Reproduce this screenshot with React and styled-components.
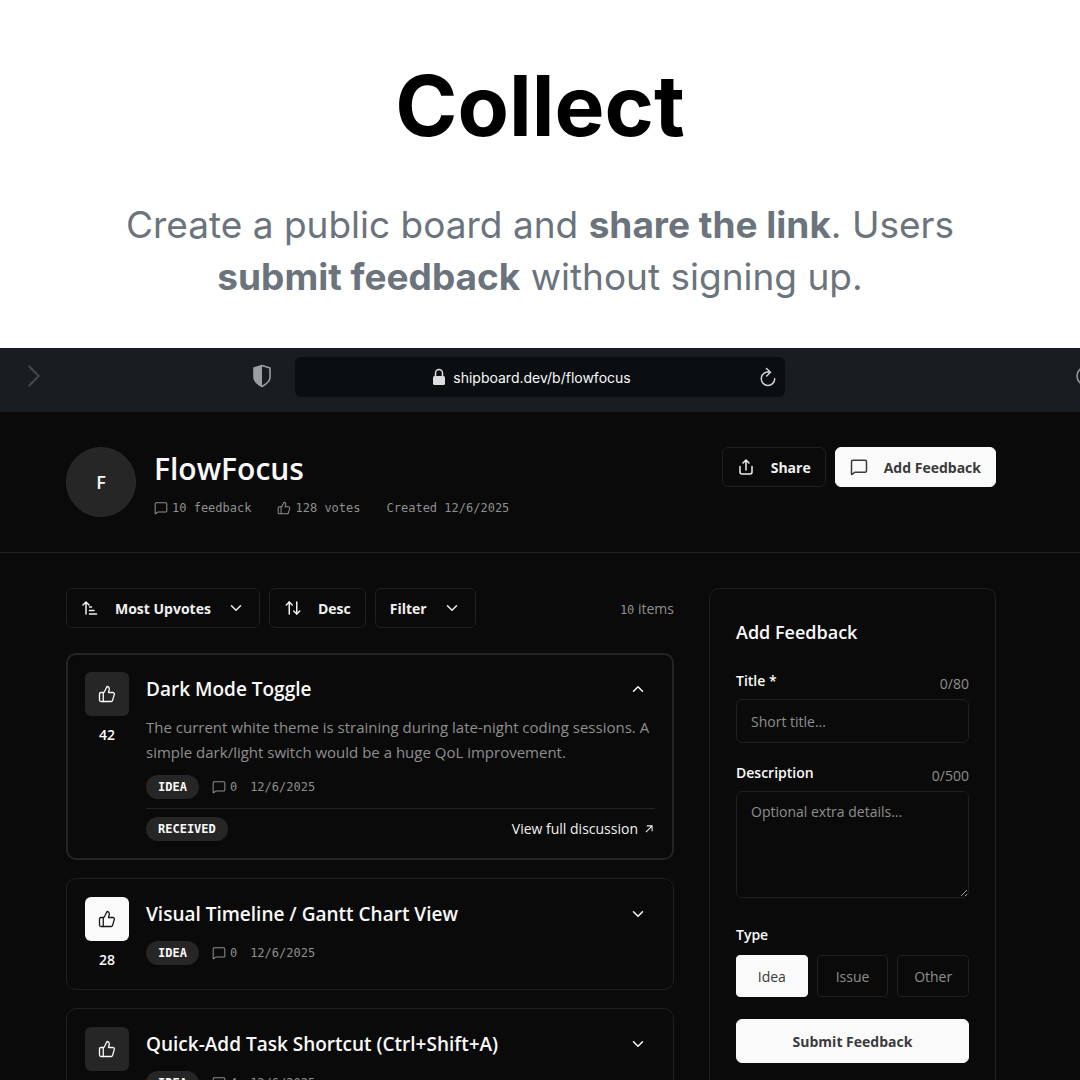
import React, { useState } from "react";
import styled, { createGlobalStyle, css } from "styled-components";
import {
  ArrowUpDown,
  ChevronDown,
  ChevronRight,
  ChevronUp,
  MessageSquare,
  ThumbsUp,
} from "lucide-react";

const GlobalStyle = createGlobalStyle`
  * {
    box-sizing: border-box;
  }
  body {
    margin: 0;
    background: #fff;
    font-family: "Open Sans", "Noto Sans", sans-serif;
  }
  h1, h2, h3, p, fieldset {
    margin: 0;
  }
  button, input, textarea {
    font-family: inherit;
  }
`;

const Page = styled.main`
  display: flex;
  flex-direction: column;
  height: 100vh;
  overflow: hidden;
`;

// Intro
const Hero = styled.section`
  flex: none;
  padding: 52px 80px 44px;
  text-align: center;
  font-family: Inter, sans-serif;
`;

const HeroTitle = styled.h1`
  font-size: 84px;
  line-height: 108px;
  font-weight: 700;
  color: #000;
`;

const HeroText = styled.p`
  max-width: 880px;
  margin: 39px auto 1px;
  font-size: 37px;
  line-height: 52px;
  color: #6b737c;

  strong {
    font-weight: 700;
  }
`;

// Browser bar
const BrowserBar = styled.div`
  flex: none;
  display: grid;
  grid-template-columns: 1fr 490px 1fr;
  height: 64px;
  padding-top: 8px;
  background: #181d20;
  overflow: hidden;
`;

const BarSide = styled.div`
  display: flex;
  align-items: center;
  justify-content: ${(p) => (p.$end ? "flex-end" : "space-between")};
  height: 40px;
  padding: ${(p) => (p.$end ? "0" : "0 22px 0 15px")};
  margin-right: ${(p) => (p.$end ? "-16px" : "0")};
`;

const AddressField = styled.div`
  display: flex;
  align-items: center;
  height: 40px;
  margin-top: 1px;
  padding: 0 8px 0 10px;
  border-radius: 6px;
  background: #0a0e11;
`;

const Address = styled.span`
  flex: 1;
  display: flex;
  align-items: center;
  justify-content: center;
  gap: 8px;
  font-family: Inter, sans-serif;
  font-size: 14px;
  color: #f8f9f9;
`;

const BarButton = styled.button`
  display: flex;
  padding: 0;
  border: 0;
  background: none;
  color: ${(p) => p.$color};
`;

// Board
const Board = styled.div`
  flex: 1;
  min-height: 0;
  background: #0a0a0a;
  color: #fafafa;
`;

const BoardHeader = styled.header`
  display: flex;
  align-items: flex-start;
  gap: 18px;
  padding: 35px 84px 35px 66px;
  border-bottom: 1px solid #242424;
`;

const Avatar = styled.div`
  display: flex;
  align-items: center;
  justify-content: center;
  width: 70px;
  height: 70px;
  border: 1px solid #2c2c2c;
  border-radius: 50%;
  background: #262626;
  font-size: 18px;
  font-weight: 600;
`;

const BoardInfo = styled.div`
  flex: 1;
`;

const BoardName = styled.h2`
  font-size: 30px;
  line-height: 44px;
  font-weight: 600;
`;

const Stats = styled.div`
  display: flex;
  gap: 26px;
  margin-top: 8px;
`;

const Stat = styled.span`
  display: flex;
  align-items: center;
  gap: 4px;
  font-family: "DejaVu Sans Mono", monospace;
  font-size: 12px;
  line-height: 18px;
  color: #8f8f8f;
`;

const Actions = styled.div`
  display: flex;
  gap: 9px;
`;

const Button = styled.button`
  display: flex;
  align-items: center;
  gap: 16px;
  height: 40px;
  padding: 0 14px;
  border: 1px solid #1f1f1f;
  border-radius: 6px;
  background: #0a0a0a;
  color: #f0f0f0;
  font-size: 14px;
  font-weight: 700;
  white-space: nowrap;

  ${(p) =>
    p.$primary &&
    css`
      border-color: #fafafa;
      background: #fafafa;
      color: #3a3a3a;
    `}
`;

const Content = styled.div`
  display: grid;
  grid-template-columns: minmax(0, 1fr) 287px;
  align-items: start;
  gap: 35px;
  padding: 35px 84px 35px 66px;
`;

const Toolbar = styled.div`
  display: flex;
  align-items: center;
  gap: 9px;
`;

const ItemCount = styled.span`
  margin-left: auto;
  font-size: 14px;
  color: #8f8f8f;

  span {
    font-family: "DejaVu Sans Mono", monospace;
    font-size: 12px;
  }
`;

const CardList = styled.div`
  display: flex;
  flex-direction: column;
  gap: 18px;
  margin-top: 25px;
`;

const Card = styled.article`
  display: flex;
  align-items: flex-start;
  gap: 17px;
  padding: ${(p) => (p.$open ? "17px" : "18px")};
  border: ${(p) => (p.$open ? "2px solid #242424" : "1px solid #1f1f1f")};
  border-radius: 10px;
`;

const Votes = styled.div`
  display: flex;
  flex-direction: column;
  align-items: center;
  gap: 8px;
  font-size: 14px;
  line-height: 22px;
  font-weight: 600;
`;

const VoteButton = styled.button`
  display: flex;
  align-items: center;
  justify-content: center;
  width: 44px;
  height: 44px;
  border: 0;
  border-radius: 6px;
  background: ${(p) => (p.$voted ? "#fafafa" : "#262626")};
  color: ${(p) => (p.$voted ? "#171717" : "#fafafa")};
`;

const CardBody = styled.div`
  flex: 1;
  min-width: 0;
  display: flex;
  flex-direction: column;
  gap: 9px;
`;

const CardTop = styled.div`
  display: flex;
  align-items: center;
  justify-content: space-between;
  height: 34px;
`;

const CardTitle = styled.h3`
  font-size: 19px;
  line-height: 26px;
  font-weight: 600;
`;

const Toggle = styled.button`
  display: flex;
  align-items: center;
  justify-content: center;
  width: 34px;
  height: 34px;
  padding: 0;
  border: 0;
  background: none;
  color: #fafafa;
`;

const CardText = styled.p`
  font-size: 15px;
  line-height: 25px;
  color: #8f8f8f;
`;

const Meta = styled.div`
  display: flex;
  align-items: center;
  gap: 13px;
  padding-top: 1px;
`;

const Badge = styled.span`
  padding: 0 12px;
  border-radius: 12px;
  background: #262626;
  font-family: "DejaVu Sans Mono", monospace;
  font-size: 12px;
  line-height: 24px;
  font-weight: 700;
`;

const CardFoot = styled.div`
  display: flex;
  align-items: center;
  justify-content: space-between;
  padding-top: 8px;
  border-top: 1px solid #242424;
`;

const DiscussionLink = styled.a`
  display: flex;
  align-items: center;
  gap: 7px;
  padding-right: 2px;
  color: #f0f0f0;
  font-size: 14px;
  line-height: 24px;
  text-decoration: none;
`;

// Feedback form
const Panel = styled.form`
  padding: 26px;
  border: 1px solid #1f1f1f;
  border-radius: 10px;
`;

const PanelTitle = styled.h3`
  font-size: 18px;
  line-height: 34px;
  font-weight: 600;
`;

const FieldHead = styled.div`
  display: flex;
  align-items: center;
  justify-content: space-between;
  margin-top: ${(p) => p.$space};
  font-size: 14px;
  line-height: 30px;
  color: #8f8f8f;
`;

const Label = styled.label`
  color: #fafafa;
  font-size: 14px;
  line-height: 24px;
  font-weight: 600;
  align-self: flex-start;
`;

const fieldStyle = css`
  display: block;
  width: 100%;
  border: 1px solid #1f1f1f;
  border-radius: 6px;
  background: #0a0a0a;
  color: #fafafa;
  font-size: 14px;

  &::placeholder {
    color: #8f8f8f;
    opacity: 1;
  }
`;

const TextInput = styled.input`
  ${fieldStyle}
  height: 44px;
  padding: 0 14px;
`;

const TextArea = styled.textarea`
  ${fieldStyle}
  height: 107px;
  padding: 8px 14px;
  line-height: 24px;
  resize: vertical;
  color-scheme: dark;
`;

const TypeGroup = styled.fieldset`
  margin-top: 25px;
  padding: 0;
  border: 0;
  min-width: 0;
`;

const TypeLegend = styled.legend`
  padding: 0;
  font-size: 14px;
  line-height: 24px;
  font-weight: 600;
`;

const TypeRow = styled.div`
  display: grid;
  grid-template-columns: repeat(3, 1fr);
  gap: 9px;
  margin-top: 8px;
`;

const TypeButton = styled.button`
  height: 42px;
  padding: 0;
  border: 1px solid ${(p) => (p.$active ? "#fafafa" : "#1f1f1f")};
  border-radius: 4px;
  background: ${(p) => (p.$active ? "#fafafa" : "#0a0a0a")};
  color: ${(p) => (p.$active ? "#3a3a3a" : "#8f8f8f")};
  font-size: 14px;
`;

const SubmitButton = styled(Button)`
  justify-content: center;
  width: 100%;
  height: 44px;
  margin-top: 22px;
`;

function ShieldIcon() {
  return (
    <svg width="22" height="24" viewBox="0 0 22 24" fill="none">
      <path
        d="M11 1.500 19 4v9.500c0 4-3.500 6.500-8 9-4.500-2.500-8-5-8-9V4z"
        stroke="currentColor"
        strokeWidth="1.600"
        strokeLinejoin="round"
      />
      <path d="M11 1.500 3 4v9.500c0 4 3.500 6.500 8 9z" fill="currentColor" />
    </svg>
  );
}

function LockIcon() {
  return (
    <svg width="12" height="18" viewBox="0 0 12 18" fill="none">
      <path
        d="M2.500 9V5a3.500 3.500 0 0 1 7 0v4"
        stroke="#dcdddd"
        strokeWidth="1.500"
      />
      <rect y="8" width="12" height="9" rx="1.500" fill="#dcdddd" />
    </svg>
  );
}

function ReloadIcon() {
  return (
    <svg width="18" height="20" viewBox="0 0 18 20" fill="none">
      <path
        d="M10.500 5.200a6.700 6.700 0 1 0 5.200 6.500M7.500 1.500l4 3.800-3.800 3.700"
        stroke="currentColor"
        strokeWidth="1.500"
        strokeLinecap="round"
        strokeLinejoin="round"
      />
    </svg>
  );
}

function ShareIcon() {
  return (
    <svg width="18" height="18" viewBox="0 0 18 18" fill="none">
      <path
        d="M3 8.500v5.500q0 2 2 2h8q2 0 2-2V8.500M9 12V2M6 5l3-3 3 3"
        stroke="currentColor"
        strokeWidth="1.500"
        strokeLinecap="round"
        strokeLinejoin="round"
      />
    </svg>
  );
}

function SortIcon() {
  return (
    <svg width="18" height="18" viewBox="0 0 18 18" fill="none">
      <path
        d="M5 15V3M2 6l3-3 3 3M8.500 8h2M8.500 11.500h4.500M8.500 15h7"
        stroke="currentColor"
        strokeWidth="1.500"
        strokeLinecap="round"
        strokeLinejoin="round"
      />
    </svg>
  );
}

function OutIcon() {
  return (
    <svg width="8" height="8" viewBox="0 0 9 9" fill="none">
      <path d="M1 8l7-7M2 1h6v6" stroke="currentColor" strokeWidth="1.200" />
    </svg>
  );
}

const ITEMS = [
  {
    id: 1,
    title: "Dark Mode Toggle",
    votes: 42,
    comments: 0,
    text: "The current white theme is straining during late-night coding sessions. A simple dark/light switch would be a huge QoL improvement.",
    status: "RECEIVED",
  },
  {
    id: 2,
    title: "Visual Timeline / Gantt Chart View",
    votes: 28,
    comments: 0,
    voted: true,
  },
  {
    id: 3,
    title: "Quick-Add Task Shortcut (Ctrl+Shift+A)",
    votes: 21,
    comments: 4,
  },
];

function FeedbackCard({ item, open, onToggle }) {
  return (
    <Card $open={open}>
      <Votes>
        <VoteButton $voted={item.voted} aria-label="Upvote">
          <ThumbsUp size={18} strokeWidth={1.75} />
        </VoteButton>
        {item.votes}
      </Votes>
      <CardBody>
        <CardTop>
          <CardTitle>{item.title}</CardTitle>
          <Toggle aria-label="Toggle details" onClick={onToggle}>
            {open ? <ChevronUp size={18} /> : <ChevronDown size={18} />}
          </Toggle>
        </CardTop>
        {open && <CardText>{item.text}</CardText>}
        <Meta>
          <Badge>IDEA</Badge>
          <Stat>
            <MessageSquare size={14} strokeWidth={1.75} />
            {item.comments}
          </Stat>
          <Stat>12/6/2025</Stat>
        </Meta>
        {open && (
          <CardFoot>
            <Badge>{item.status}</Badge>
            <DiscussionLink href="#discussion">
              View full discussion <OutIcon />
            </DiscussionLink>
          </CardFoot>
        )}
      </CardBody>
    </Card>
  );
}

function FeedbackForm() {
  const [title, setTitle] = useState("");
  const [details, setDetails] = useState("");
  const [type, setType] = useState("Idea");

  return (
    <Panel onSubmit={(e) => e.preventDefault()}>
      <PanelTitle>Add Feedback</PanelTitle>
      <FieldHead $space="20px">
        <Label htmlFor="title">Title *</Label>
        <span>{title.length}/80</span>
      </FieldHead>
      <TextInput
        id="title"
        maxLength={80}
        placeholder="Short title..."
        value={title}
        onChange={(e) => setTitle(e.target.value)}
      />
      <FieldHead $space="18px">
        <Label htmlFor="details">Description</Label>
        <span>{details.length}/500</span>
      </FieldHead>
      <TextArea
        id="details"
        maxLength={500}
        placeholder="Optional extra details..."
        value={details}
        onChange={(e) => setDetails(e.target.value)}
      />
      <TypeGroup>
        <TypeLegend>Type</TypeLegend>
        <TypeRow>
          {["Idea", "Issue", "Other"].map((name) => (
            <TypeButton
              key={name}
              type="button"
              $active={name === type}
              aria-pressed={name === type}
              onClick={() => setType(name)}
            >
              {name}
            </TypeButton>
          ))}
        </TypeRow>
      </TypeGroup>
      <SubmitButton type="submit" $primary>
        Submit Feedback
      </SubmitButton>
    </Panel>
  );
}

export default function App() {
  const [openId, setOpenId] = useState(1);

  return (
    <Page>
      <GlobalStyle />
      <Hero>
        <HeroTitle>Collect</HeroTitle>
        <HeroText>
          Create a public board and <strong>share the link</strong>. Users{" "}
          <strong>submit feedback</strong> without signing up.
        </HeroText>
      </Hero>

      <BrowserBar>
        <BarSide>
          <BarButton $color="#44494c" aria-label="Forward">
            <ChevronRight size={38} strokeWidth={1.25} />
          </BarButton>
          <BarButton $color="#9c9fa1" aria-label="Privacy report">
            <ShieldIcon />
          </BarButton>
        </BarSide>
        <AddressField>
          <Address>
            <LockIcon />
            shipboard.dev/b/flowfocus
          </Address>
          <BarButton $color="#d0d2d3" aria-label="Reload">
            <ReloadIcon />
          </BarButton>
        </AddressField>
        <BarSide $end>
          <BarButton $color="#9c9fa1" aria-label="Downloads">
            <svg width="20" height="20" viewBox="0 0 20 20" fill="none">
              <circle cx="10" cy="10" r="9" stroke="currentColor" strokeWidth="1.500" />
              <path d="M10 5v9M6.500 10.500 10 14l3.500-3.500" stroke="currentColor" strokeWidth="1.500" />
            </svg>
          </BarButton>
        </BarSide>
      </BrowserBar>

      <Board>
        <BoardHeader>
          <Avatar>F</Avatar>
          <BoardInfo>
            <BoardName>FlowFocus</BoardName>
            <Stats>
              <Stat>
                <MessageSquare size={14} strokeWidth={1.75} />
                10 feedback
              </Stat>
              <Stat>
                <ThumbsUp size={14} strokeWidth={1.75} />
                128 votes
              </Stat>
              <Stat>Created 12/6/2025</Stat>
            </Stats>
          </BoardInfo>
          <Actions>
            <Button>
              <ShareIcon />
              Share
            </Button>
            <Button $primary>
              <MessageSquare size={18} />
              Add Feedback
            </Button>
          </Actions>
        </BoardHeader>

        <Content>
          <section>
            <Toolbar>
              <Button>
                <SortIcon />
                Most Upvotes
                <ChevronDown size={18} />
              </Button>
              <Button>
                <ArrowUpDown size={18} />
                Desc
              </Button>
              <Button>
                Filter
                <ChevronDown size={18} />
              </Button>
              <ItemCount>
                <span>10</span> items
              </ItemCount>
            </Toolbar>
            <CardList>
              {ITEMS.map((item) => (
                <FeedbackCard
                  key={item.id}
                  item={item}
                  open={item.id === openId}
                  onToggle={() => setOpenId(item.id === openId ? null : item.id)}
                />
              ))}
            </CardList>
          </section>
          <FeedbackForm />
        </Content>
      </Board>
    </Page>
  );
}
